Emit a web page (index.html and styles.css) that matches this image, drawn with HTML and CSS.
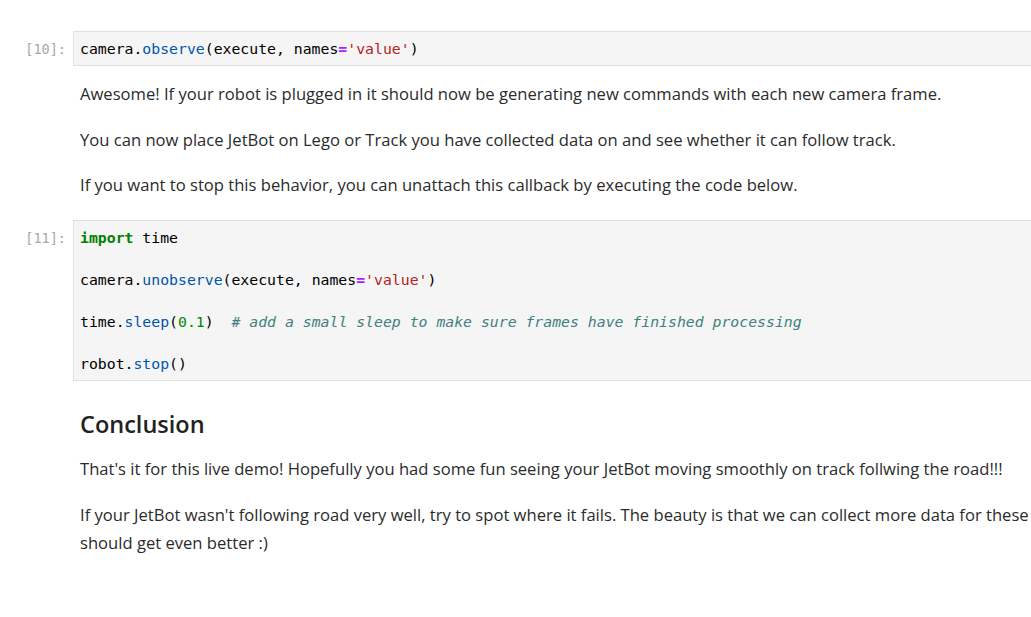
FILE: index.html
```html
<!DOCTYPE html>
<html>
<head>
<meta charset="utf-8">
<link rel="stylesheet" href="styles.css">
</head>
<body>
<div class="notebook">
  <div class="cell code-cell first">
    <div class="prompt">[10]:</div>
    <pre class="editor">camera.<span class="p">observe</span>(execute, names<span class="o">=</span><span class="s">'value'</span>)</pre>
  </div>

  <div class="cell md-cell md1">
    <div class="prompt"></div>
    <div class="md">
      <p>Awesome! If your robot is plugged in it should now be generating new commands with each new camera frame.</p>
      <p>You can now place JetBot on Lego or Track you have collected data on and see whether it can follow track.</p>
      <p>If you want to stop this behavior, you can unattach this callback by executing the code below.</p>
    </div>
  </div>

  <div class="cell code-cell">
    <div class="prompt">[11]:</div>
    <pre class="editor"><span class="k">import</span> time

camera.<span class="p">unobserve</span>(execute, names<span class="o">=</span><span class="s">'value'</span>)

time.<span class="p">sleep</span>(<span class="n">0.1</span>)  <span class="c"># add a small sleep to make sure frames have finished processing</span>

robot.<span class="p">stop</span>()</pre>
  </div>

  <div class="cell md-cell md2">
    <div class="prompt"></div>
    <div class="md">
      <h2>Conclusion</h2>
      <p>That's it for this live demo! Hopefully you had some fun seeing your JetBot moving smoothly on track follwing the road!!!</p>
      <p>If your JetBot wasn't following road very well, try to spot where it fails. The beauty is that we can collect more data for these failure scenarios and the JetBot should get even better :)</p>
    </div>
  </div>
</div>
</body>
</html>
```

FILE: styles.css
```css
html, body {
  margin: 0;
  padding: 0;
  background: #ffffff;
  overflow: hidden;
}

.notebook {
  width: 1400px;
  padding-top: 31px;
}

.cell {
  display: flex;
  align-items: flex-start;
}

.prompt {
  flex: 0 0 73px;
  box-sizing: border-box;
  padding-right: 7px;
  text-align: right;
  font-family: "DejaVu Sans Mono", monospace;
  font-size: 13.5px;
  line-height: 21px;
  color: #a8a8a8;
  padding-top: 8px;
}

.editor {
  flex: 1 1 auto;
  margin: 0;
  background: #f5f5f5;
  border: 1px solid #e0e0e0;
  padding: 6px 6px;
  font-family: "DejaVu Sans Mono", monospace;
  font-size: 14.8px;
  line-height: 21px;
  color: #000;
  white-space: pre;
}

.editor .p { color: #0055aa; }
.editor .o { color: #aa22ff; font-weight: bold; }
.editor .s { color: #ba2121; }
.editor .k { color: #008000; font-weight: bold; }
.editor .n { color: #008800; }
.editor .c { color: #408080; font-style: italic; }

.md {
  flex: 1 1 auto;
  padding-left: 7px;
  font-family: "Open Sans", sans-serif;
  font-size: 16.6px;
  line-height: 28px;
  color: #2b2b2b;
}

.md p {
  margin: 0 0 17.5px 0;
  width: 1240px;
}

.md p:last-child { margin-bottom: 0; }

.md1 { padding-top: 14px; padding-bottom: 21px; }
.md2 { padding-top: 28px; }

.md h2 {
  margin: 0 0 16px 0;
  font-size: 23.5px;
  line-height: 30px;
  font-weight: 600;
  color: #222;
}
```
